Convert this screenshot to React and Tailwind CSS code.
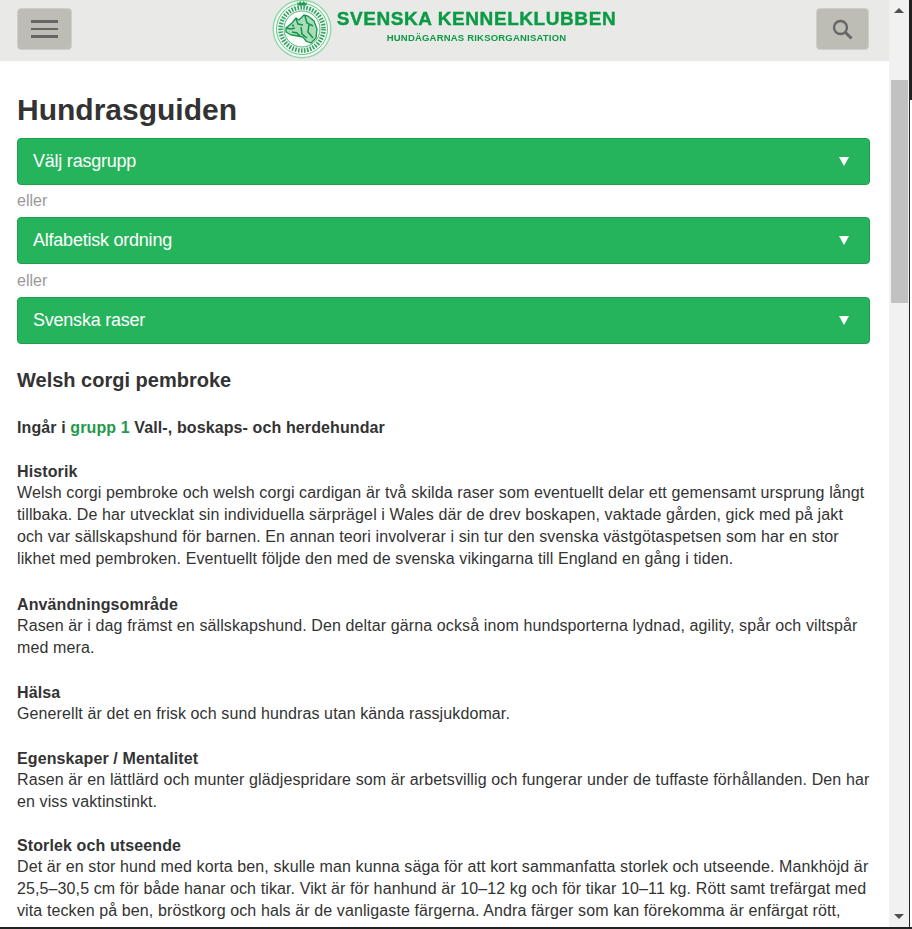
import React from "react";

function Seal() {
  return (
    <svg width="60" height="60" viewBox="0 0 60 60" className="shrink-0 blur-[0.5px]">
      <circle cx="30" cy="30" r="28.8" fill="#f4faf5" stroke="#8ed8a8" strokeWidth="1.4" />
      <circle cx="30" cy="30" r="25.5" fill="none" stroke="#63c48a" strokeWidth="1" />
      <circle cx="30" cy="30" r="21.5" fill="none" stroke="#14934a" strokeWidth="4.5" strokeDasharray="1.6 1.4" opacity="0.85" />
      <circle cx="30" cy="30" r="18" fill="#fbfdfb" stroke="#2aa55d" strokeWidth="0.8" />
      <path d="M25 2.5l1.5 2 1.8-2.4 1.7 2.4 1.7-2.4 1.8 2.4 1.5-2-.7 4h-8.6z" fill="#1c9a4e" />
      <path d="M14 29l6-5 4-5 3 2 5-5 4 1 6 5 3 8-1 9-5 5-5-2-3-4-5-1-7-1-5-3z" fill="#a9ddb9" stroke="#14934a" strokeWidth="1.3" />
      <path d="M14 29l5 1 4-1M24 20l2 5 5 1M33 17l2 7 6 3M37 25l-1 8 5 6M29 28l1 7 5 4M20 33l5 1 3 3" fill="none" stroke="#14934a" strokeWidth="1.5" />
      <circle cx="21" cy="26.5" r="1" fill="#136f38" />
    </svg>
  );
}

function Logo() {
  return (
    <div className="flex items-start gap-[5px] -mt-[9.5px] h-[60px]">
      <Seal />
      <div className="flex flex-col items-center w-[280px] pt-[10.5px] text-[#0b9a45] font-bold blur-[0.3px]">
        <span className="text-[19px] leading-[20px] tracking-[0.57px] [-webkit-text-stroke:0.4px_#0b9a45] whitespace-nowrap">SVENSKA KENNELKLUBBEN</span>
        <span className="text-[9.5px] leading-[12px] mt-[3px] tracking-[0.2px] whitespace-nowrap">HUNDÄGARNAS RIKSORGANISATION</span>
      </div>
    </div>
  );
}

function Dropdown({ label }) {
  return (
    <div className="flex items-center justify-between h-[47px] pl-[15px] pr-[20px] bg-[#25b45b] border border-[#1fa04f] rounded-[4px] text-white text-[18px] tracking-[-0.23px]">
      <span className="-mt-[2px]">{label}</span>
      <span className="w-0 h-0 border-x-[5px] border-x-transparent border-t-[9px] border-t-white" />
    </div>
  );
}

function Section({ title, children, className = "mb-[24px]", titleClass = "leading-[20px]" }) {
  return (
    <p className={className}>
      <strong className={"block " + titleClass}>{title}</strong>
      {children}
    </p>
  );
}

export default function App() {
  return (
    <div className="h-[929px] w-[912px] overflow-hidden flex flex-col bg-white text-[#333] text-[16px] leading-[22px] tracking-[0.11px] font-['Liberation_Sans',Arial,sans-serif]">
      <div className="flex flex-1 min-h-0">
        <div className="w-[889px] shrink-0 overflow-hidden">
          <header className="h-[61px] bg-[#e9e9e7] flex items-start justify-between pt-[8px] pl-[17px] pr-[20px] overflow-hidden">
            <button className="w-[55px] h-[42px] rounded-[4px] bg-[#bdbdb5] border border-[#cfcfc9] flex flex-col items-center justify-center gap-[5px]">
              <span className="block w-[27px] h-[2.5px] bg-[#666]" />
              <span className="block w-[27px] h-[2.5px] bg-[#666]" />
              <span className="block w-[27px] h-[2.5px] bg-[#666]" />
            </button>
            <Logo />
            <button className="w-[53px] h-[42px] rounded-[4px] bg-[#bdbdb5] border border-[#cfcfc9] flex items-center justify-center">
              <svg width="21" height="21" viewBox="0 0 21 21" fill="none" stroke="#666" strokeWidth="2.4">
                <circle cx="8.5" cy="8.5" r="6.5" />
                <path d="M13.5 13.5l6 6" strokeWidth="3" />
              </svg>
            </button>
          </header>
          <main className="pl-[17px] pr-[19px]">
            <h1 className="text-[30px] leading-[32px] tracking-normal font-bold mt-[33px] mb-[12px]">Hundrasguiden</h1>
            <Dropdown label="Välj rasgrupp" />
            <div className="text-[#999] tracking-normal mt-[5px] mb-[3px] h-[24px]">eller</div>
            <Dropdown label="Alfabetisk ordning" />
            <div className="text-[#999] tracking-normal mt-[6px] mb-[2px] h-[25px]">eller</div>
            <Dropdown label="Svenska raser" />
            <h2 className="text-[20px] leading-[22px] tracking-normal font-bold mt-[25px] mb-[26px]">Welsh corgi pembroke</h2>
            <p className="font-bold mb-[22px]">
              Ingår i <span className="text-[#1f9a4c]">grupp 1</span> Vall-, boskaps- och herdehundar
            </p>
            <Section title="Historik" className="mb-[25px]" titleClass="leading-[21px]">
              Welsh corgi pembroke och welsh corgi cardigan är två skilda raser som eventuellt delar ett gemensamt ursprung långt tillbaka. De har utvecklat sin individuella särprägel i Wales där de drev boskapen, vaktade gården, gick med på jakt och var sällskapshund för barnen. En annan teori involverar i sin tur den svenska västgötaspetsen som har en stor likhet med pembroken. Eventuellt följde den med de svenska vikingarna till England en gång i tiden.
            </Section>
            <Section title="Användningsområde">
              Rasen är i dag främst en sällskapshund. Den deltar gärna också inom hundsporterna lydnad, agility, spår och viltspår med mera.
            </Section>
            <Section title="Hälsa">
              Generellt är det en frisk och sund hundras utan kända rassjukdomar.
            </Section>
            <Section title="Egenskaper / Mentalitet" className="mb-[23px]">
              Rasen är en lättlärd och munter glädjespridare som är arbetsvillig och fungerar under de tuffaste förhållanden. Den har en viss vaktinstinkt.
            </Section>
            <Section title="Storlek och utseende">
              Det är en stor hund med korta ben, skulle man kunna säga för att kort sammanfatta storlek och utseende. Mankhöjd är 25,5–30,5 cm för både hanar och tikar. Vikt är för hanhund är 10–12 kg och för tikar 10–11 kg. Rött samt trefärgat med vita tecken på ben, bröstkorg och hals är de vanligaste färgerna. Andra färger som kan förekomma är enfärgat rött,
            </Section>
          </main>
        </div>
        <div className="w-[20px] shrink-0 bg-[#f1f1f1] flex flex-col items-center justify-between">
          <div className="w-full flex flex-col items-center">
            <span className="mt-[8px] w-0 h-0 border-x-[5px] border-x-transparent border-b-[5px] border-b-[#505050]" />
            <div className="mt-[67px] w-[17px] h-[223px] bg-[#c1c1c1]" />
          </div>
          <span className="mb-[8px] w-0 h-0 border-x-[5px] border-x-transparent border-t-[5px] border-t-[#505050]" />
        </div>
        <div className="w-[3px] shrink-0 flex flex-col">
          <div className="h-[100px] bg-[#222]" />
          <div className="flex-1 flex">
            <div className="w-[1px] bg-[#222]" />
            <div className="flex-1 bg-white" />
          </div>
        </div>
      </div>
      <div className="h-[2px] shrink-0 bg-[#222]" />
    </div>
  );
}
